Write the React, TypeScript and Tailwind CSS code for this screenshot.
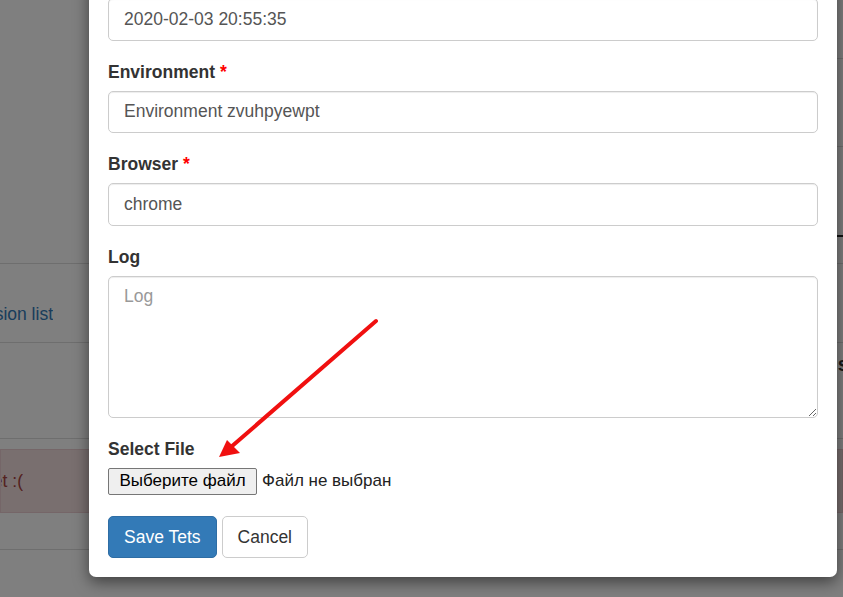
import React from 'react';

const labelCls = "block mb-[6px] text-[17.5px] leading-[25px] font-bold text-[#333]";
const inputCls =
  "block w-full h-[42.5px] rounded-[5px] border border-[#ccc] bg-white px-[15px] text-[17.5px] text-[#555] shadow-[inset_0_1px_1px_rgba(0,0,0,0.075)] outline-none placeholder:text-[#999]";

const Field = ({ label, value, required }: { label: string; value: string; required?: boolean }) => (
  <div className="mb-[19px]">
    <label className={labelCls}>
      {label}
      {required && <span className="ml-[5px] text-[#f00]">*</span>}
    </label>
    <input type="text" defaultValue={value} className={inputCls} />
  </div>
);

const App = () => {
  return (
    <div className="relative h-[597px] w-[843px] overflow-hidden bg-white font-['Liberation_Sans',Arial,sans-serif]">
      {/* page behind the modal */}
      <div className="flex flex-col">
        <div className="flex h-[263px]">
          <div className="flex-1" />
          <div className="flex w-[40px] flex-col">
            <div className="h-[58px]" />
            <div className="h-[88px] border-t border-[#ddd]" />
            <div className="h-[89px] border-t border-[#ddd]" />
            <div className="h-[28px] border-t-2 border-[#222]" />
          </div>
        </div>
        <div className="flex h-[79px] border-t border-[#ddd] pt-[38px]">
          <div className="flex w-[53px] justify-end overflow-hidden whitespace-nowrap text-[17.5px] leading-[25px] text-[#337ab7]">
            Back to session list
          </div>
        </div>
        <div className="flex h-[96px] border-t border-[#ddd] pt-[9px]">
          <div className="flex-1" />
          <div className="w-[23px] whitespace-nowrap text-[20px] leading-[25px] font-bold text-[#333]">List</div>
        </div>
        <div className="h-[11px] border-t border-[#ddd]" />
        <div className="flex h-[64px] items-center border border-[#ebccd1] bg-[#f2dede]">
          <div className="flex w-[22px] justify-end overflow-hidden whitespace-nowrap text-[17.5px] text-[#a94442]">
            No results yet :(
          </div>
        </div>
        <div className="h-[36px]" />
        <div className="border-t border-[#ddd]" />
      </div>

      {/* backdrop */}
      <div className="absolute inset-0 bg-black/50" />

      {/* modal */}
      <div className="absolute left-[89px] top-[-21px] w-[748px] rounded-[7px] bg-white px-[19px] pb-[19px] pt-[19px] shadow-[0_5px_15px_rgba(0,0,0,0.5)]">
        <div className="mb-[19px]">
          <input type="text" defaultValue="2020-02-03 20:55:35" className={inputCls} />
        </div>
        <Field label="Environment" value="Environment zvuhpyewpt" required />
        <Field label="Browser" value="chrome" required />
        <div className="mb-[19px]">
          <label className={labelCls}>Log</label>
          <textarea
            placeholder="Log"
            className="block h-[142px] w-full rounded-[5px] border border-[#ccc] bg-white px-[15px] py-[7.5px] text-[17.5px] leading-[25px] text-[#555] shadow-[inset_0_1px_1px_rgba(0,0,0,0.075)] outline-none placeholder:text-[#999]"
          />
        </div>
        <div className="mb-[21px]">
          <label className={labelCls}>Select File</label>
          <div className="flex h-[27px] items-center">
            <div className="flex h-[27px] w-[149px] items-center justify-center rounded-[2px] border border-[#767676] bg-[#efefef] text-[17px] text-black">
              Выберите файл
            </div>
            <span className="ml-[5px] text-[17px] text-[#222]">Файл не выбран</span>
          </div>
        </div>
        <div className="flex gap-[5px]">
          <button className="h-[42.5px] rounded-[5px] border border-[#2e6da4] bg-[#337ab7] px-[15px] text-[17.5px] text-white">
            Save Tets
          </button>
          <button className="h-[42.5px] rounded-[5px] border border-[#ccc] bg-white px-[15px] text-[17.5px] text-[#333]">
            Cancel
          </button>
        </div>
      </div>

      {/* red arrow annotation */}
      <svg className="pointer-events-none absolute inset-0" width="843" height="597" viewBox="0 0 843 597">
        <line x1="376" y1="321" x2="231" y2="447" stroke="#f01010" strokeWidth="4" strokeLinecap="round" />
        <polygon points="219,457 227,440 240,453" fill="#f01010" />
      </svg>
    </div>
  );
};

export default App;
